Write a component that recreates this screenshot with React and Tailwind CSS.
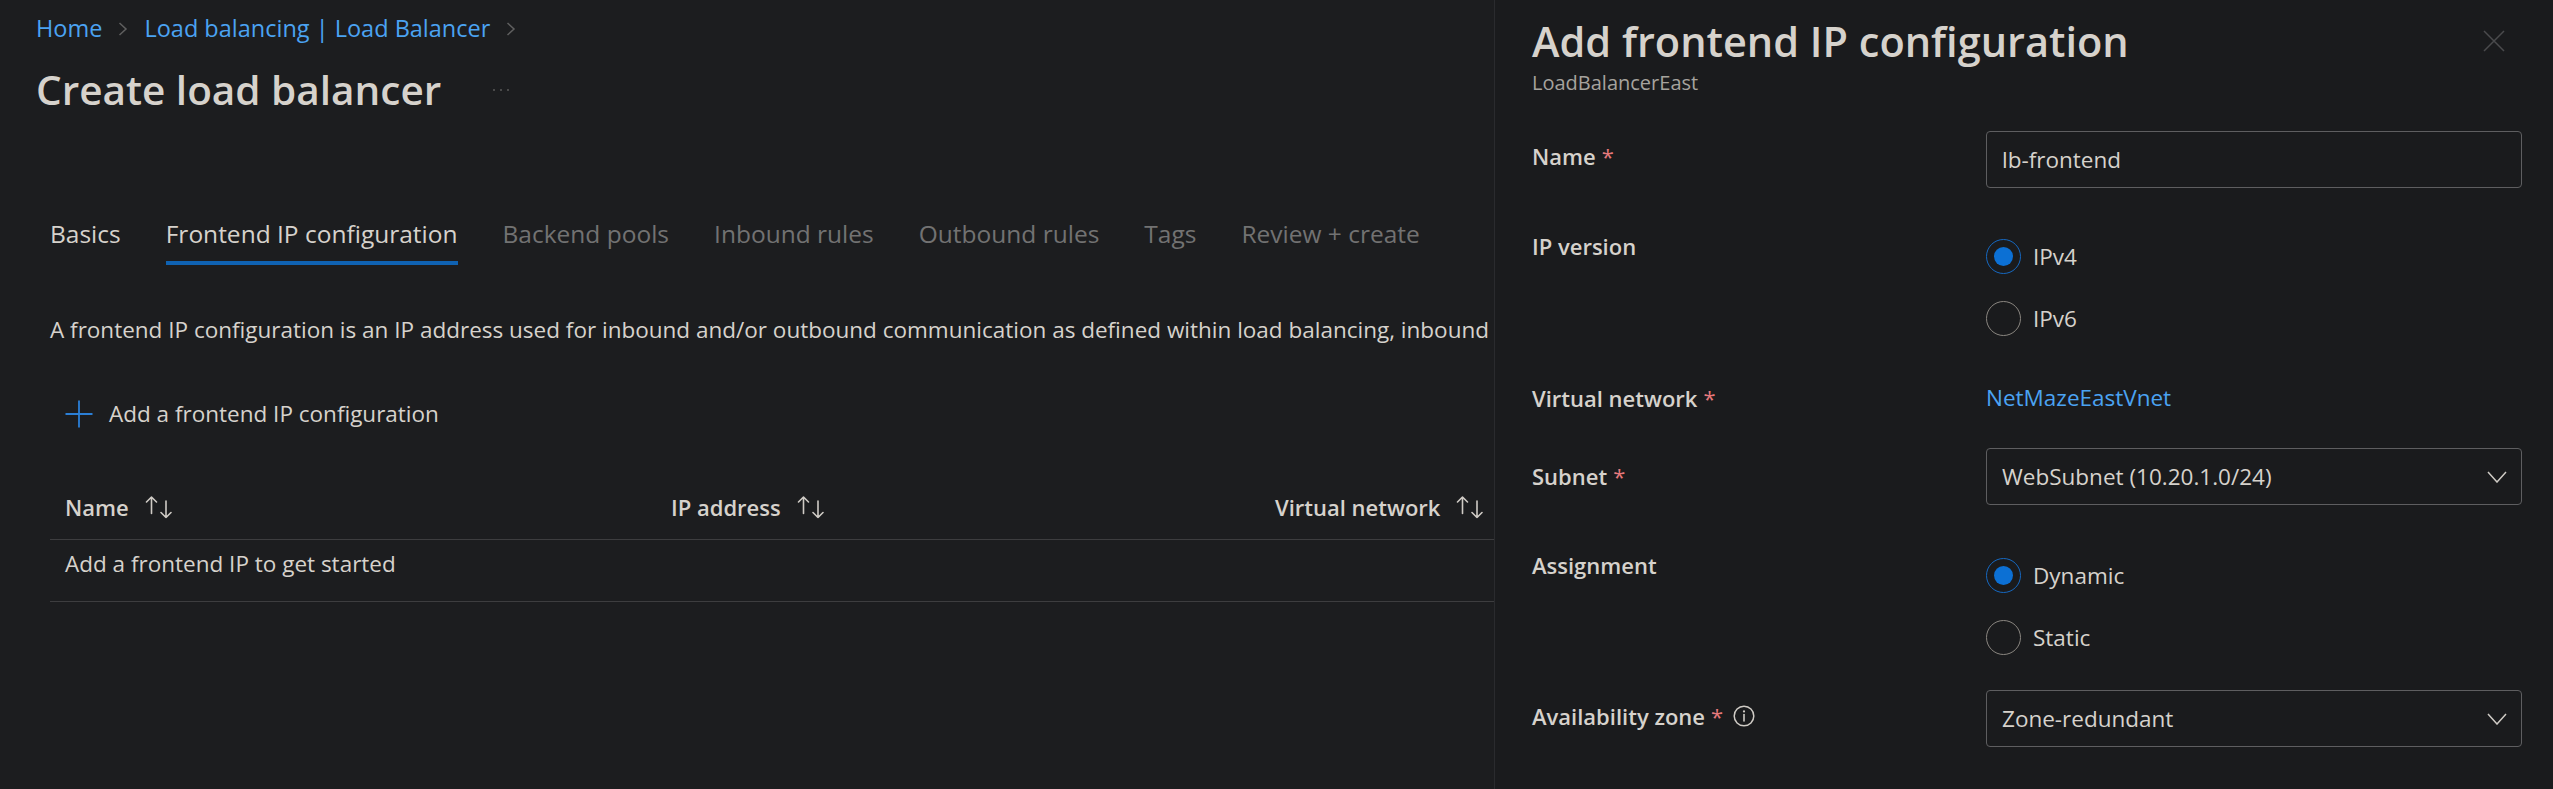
import React from "react";

function Chevron() {
  return (
    <svg width="10" height="14" viewBox="0 0 10 14" className="shrink-0">
      <path d="M1.5 1 L8 7 L1.5 13" fill="none" stroke="#5f5f5f" strokeWidth="1.5" />
    </svg>
  );
}

function SortIcon() {
  return (
    <svg width="30" height="23" viewBox="0 0 30 23" className="shrink-0">
      <g fill="none" stroke="#cfcbc5" strokeWidth="1.6" strokeLinecap="round" strokeLinejoin="round">
        <path d="M7.5 17.5V1M2.5 6L7.5 1L12.5 6" />
        <path d="M22 5V21.5M17 16.5L22 21.5L27 16.5" />
      </g>
    </svg>
  );
}

function DownChevron() {
  return (
    <svg width="20" height="12" viewBox="0 0 20 12" className="shrink-0">
      <path d="M1 1L10 11L19 1" fill="none" stroke="#cfcbc5" strokeWidth="1.5" />
    </svg>
  );
}

function InfoIcon() {
  return (
    <svg width="22" height="22" viewBox="0 0 22 22" className="shrink-0">
      <circle cx="11" cy="11" r="9.8" fill="none" stroke="#cfcbc5" strokeWidth="1.5" />
      <path d="M11 9.5V16" stroke="#cfcbc5" strokeWidth="1.6" strokeLinecap="round" />
      <circle cx="11" cy="6.4" r="1.1" fill="#cfcbc5" />
    </svg>
  );
}

function Radio({ checked, label }) {
  return (
    <div className="flex items-center gap-[12px] h-[35px]">
      {checked ? (
        <div className="w-[35px] h-[35px] rounded-full border-[1.75px] border-[#1668c0] flex items-center justify-center">
          <div className="w-[19px] h-[19px] rounded-full bg-[#0c70d4]" />
        </div>
      ) : (
        <div className="w-[35px] h-[35px] rounded-full border-[1.75px] border-[#8a8680]" />
      )}
      <span className="text-[22.5px] leading-[32px] text-[#d6d2cc]">{label}</span>
    </div>
  );
}

function Star() {
  return <span className="text-[#e6797c] font-normal ml-[6px]">*</span>;
}

function Label({ children, className = "" }) {
  return (
    <div className={"w-[454px] shrink-0 flex items-center h-[32px] text-[22px] font-semibold text-[#d6d2cc] whitespace-nowrap " + className}>
      {children}
    </div>
  );
}

export default function App() {
  const tabs = [
    { t: "Basics", s: "done" },
    { t: "Frontend IP configuration", s: "active" },
    { t: "Backend pools", s: "off" },
    { t: "Inbound rules", s: "off" },
    { t: "Outbound rules", s: "off" },
    { t: "Tags", s: "off" },
    { t: "Review + create", s: "off" },
  ];
  return (
    <div className="w-[2553px] h-[789px] flex overflow-hidden bg-[#1b1c1e] font-['Open_Sans','Noto_Sans',sans-serif]">
      {/* Left: main blade */}
      <div className="flex-1 min-w-0 overflow-hidden bg-[#1c1d1f]">
        <div className="pl-[36px] pt-[13px]">
          <nav className="flex items-center h-[32px] text-[23.5px] text-[#4ba3f2] whitespace-nowrap">
            <span>Home</span>
            <span className="mx-[16px] flex"><Chevron /></span>
            <span>Load balancing | Load Balancer</span>
            <span className="mx-[16px] flex"><Chevron /></span>
          </nav>
          <div className="mt-[17px] flex items-center h-[56px]">
            <h1 className="text-[40.5px] font-semibold leading-[56px] text-[#d6d2cc] whitespace-nowrap">Create load balancer</h1>
            <div className="ml-[52px] flex gap-[5px] items-center">
              <span className="w-[2px] h-[2px] rounded-full bg-[#5a5a5a]" />
              <span className="w-[2px] h-[2px] rounded-full bg-[#5a5a5a]" />
              <span className="w-[2px] h-[2px] rounded-full bg-[#5a5a5a]" />
            </div>
          </div>
        </div>

        <div className="pl-[50px] mt-[100px] flex gap-[45px] whitespace-nowrap">
          {tabs.map((tab) => (
            <div key={tab.t} className="flex flex-col">
              <span
                className={
                  "text-[24.5px] leading-[32px] " +
                  (tab.s === "off" ? "text-[#727272]" : "text-[#d6d2cc]")
                }
              >
                {tab.t}
              </span>
              <div className={"mt-[11px] h-[4px] " + (tab.s === "active" ? "bg-[#0f62b2]" : "bg-transparent")} />
            </div>
          ))}
        </div>

        <p className="mt-[49px] pl-[50px] whitespace-nowrap text-[22.5px] leading-[32px] text-[#d6d2cc]">
          A frontend IP configuration is an IP address used for inbound and/or outbound communication as defined within load balancing, inbound NAT rules, and outbound rules.
        </p>

        <div className="mt-[52px] pl-[65px] flex items-center gap-[16px] h-[32px]">
          <svg width="28" height="28" viewBox="0 0 28 28" className="shrink-0">
            <path d="M14 0.5V27.5M0.5 14H27.5" stroke="#2b7fd6" strokeWidth="1.8" />
          </svg>
          <span className="text-[22.5px] leading-[32px] text-[#d6d2cc] whitespace-nowrap">Add a frontend IP configuration</span>
        </div>

        <div className="mt-[49px] ml-[50px]">
          <div className="grid grid-cols-[606px_606px_1fr] h-[61px] pb-[4px] items-center border-b border-[#3d3d3f] text-[22px] font-semibold text-[#d6d2cc] whitespace-nowrap">
            <div className="pl-[15px] flex items-center gap-[15px]">Name <SortIcon /></div>
            <div className="pl-[15px] flex items-center gap-[15px]">IP address <SortIcon /></div>
            <div className="pl-[13px] flex items-center gap-[15px]">Virtual network <SortIcon /></div>
          </div>
          <div className="h-[62px] border-b border-[#3d3d3f] pt-[8px] pl-[15px] text-[22.5px] leading-[32px] text-[#d6d2cc] whitespace-nowrap">
            Add a frontend IP to get started
          </div>
        </div>
      </div>

      {/* Right: context pane */}
      <div className="w-[1059px] shrink-0 bg-[#1a1b1d] border-l border-[#2a2b2e] pl-[37px] pr-[31px]">
        <div className="pt-[15px] flex items-center">
          <h2 className="flex-1 text-[41.5px] font-semibold leading-[52px] text-[#d6d2cc] whitespace-nowrap">Add frontend IP configuration</h2>
          <svg width="22" height="22" viewBox="0 0 22 22" className="mr-[17px] shrink-0">
            <path d="M1 1L21 21M21 1L1 21" stroke="#4a4b4d" strokeWidth="1.5" />
          </svg>
        </div>
        <div className="mt-[2px] text-[20px] leading-[28px] text-[#a6a39e]">LoadBalancerEast</div>

        {/* Name */}
        <div className="mt-[34px] flex">
          <Label className="mt-[9px]">Name<Star /></Label>
          <div className="flex-1 h-[57px] border-[1.5px] border-[#5e5e60] rounded-[4px] flex items-center pl-[15px] text-[22.5px] text-[#d6d2cc]">
            lb-frontend
          </div>
        </div>

        {/* IP version */}
        <div className="mt-[42px] flex">
          <Label>IP version</Label>
          <div className="pt-[9px] flex flex-col gap-[27px]">
            <Radio checked label="IPv4" />
            <Radio label="IPv6" />
          </div>
        </div>

        {/* Virtual network */}
        <div className="mt-[46px] flex">
          <Label>Virtual network<Star /></Label>
          <div className="h-[32px] flex items-center text-[22.5px] text-[#4ba3f2]">NetMazeEastVnet</div>
        </div>

        {/* Subnet */}
        <div className="mt-[34px] flex">
          <Label className="mt-[12px]">Subnet<Star /></Label>
          <div className="flex-1 h-[57px] border-[1.5px] border-[#5e5e60] rounded-[4px] flex items-center justify-between pl-[15px] pr-[14px] text-[22.5px] text-[#d6d2cc]">
            <span>WebSubnet (10.20.1.0/24)</span>
            <DownChevron />
          </div>
        </div>

        {/* Assignment */}
        <div className="mt-[44px] flex">
          <Label>Assignment</Label>
          <div className="pt-[9px] flex flex-col gap-[27px]">
            <Radio checked label="Dynamic" />
            <Radio label="Static" />
          </div>
        </div>

        {/* Availability zone */}
        <div className="mt-[35px] flex">
          <Label className="mt-[10px]">
            Availability zone<Star />
            <span className="ml-[10px] flex"><InfoIcon /></span>
          </Label>
          <div className="flex-1 h-[57px] border-[1.5px] border-[#5e5e60] rounded-[4px] flex items-center justify-between pl-[15px] pr-[14px] text-[22.5px] text-[#d6d2cc]">
            <span>Zone-redundant</span>
            <DownChevron />
          </div>
        </div>
      </div>
    </div>
  );
}
